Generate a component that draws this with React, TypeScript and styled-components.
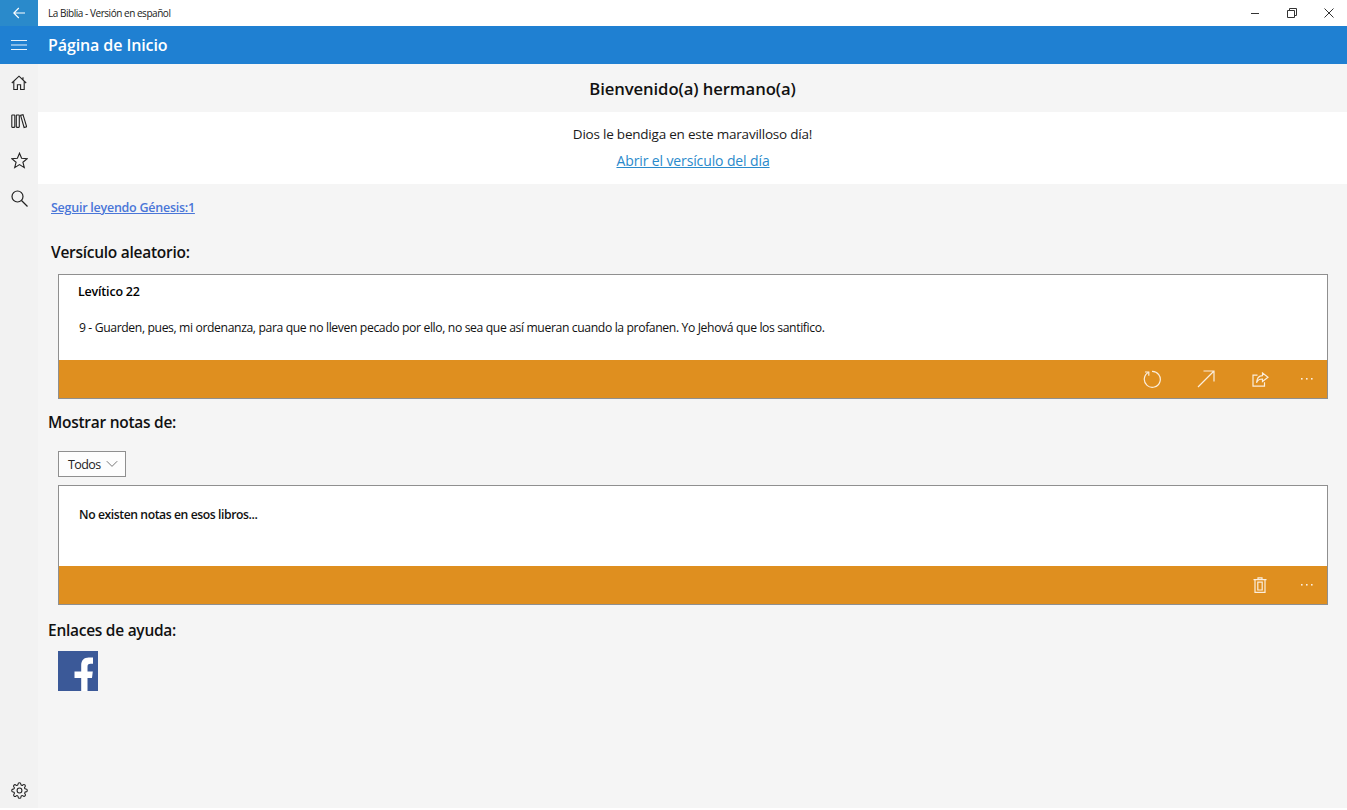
import React from "react";
import styled, { createGlobalStyle } from "styled-components";

const GlobalStyle = createGlobalStyle`
  html, body {
    margin: 0;
    padding: 0;
    background: #ffffff;
    font-family: "Open Sans", "Noto Sans", "Liberation Sans", sans-serif;
    color: #000;
    overflow: hidden;
  }
`;

const Shell = styled.div`
  width: 1347px;
  height: 810px;
  display: flex;
  flex-direction: column;
`;

const TitleBar = styled.div`
  height: 26px;
  display: flex;
  align-items: center;
  flex-shrink: 0;
`;

const BackButton = styled.div`
  width: 38px;
  height: 26px;
  background: #2a8acb;
  display: flex;
  align-items: center;
  justify-content: center;
`;

const WindowTitle = styled.span`
  margin-left: 10px;
  font-size: 10px;
  letter-spacing: -0.46px;
  color: #1a1a1a;
  flex: 1;
`;

const WindowButton = styled.div`
  width: 37px;
  height: 26px;
  display: flex;
  align-items: center;
  justify-content: center;
`;

const HeaderBar = styled.div`
  height: 38px;
  background: #1f80d2;
  display: flex;
  align-items: center;
  flex-shrink: 0;
`;

const MenuButton = styled.div`
  width: 38px;
  display: flex;
  justify-content: center;
`;

const PageTitle = styled.h1`
  margin: 0 0 0 10px;
  font-size: 16px;
  font-weight: 600;
  letter-spacing: -0.1px;
  color: #fff;
`;

const Body = styled.div`
  height: 744px;
  display: flex;
  background: #f5f5f5;
`;

const Sidebar = styled.nav`
  width: 38px;
  background: #f2f2f2;
  display: flex;
  flex-direction: column;
  align-items: center;
  padding: 11px 0 9px;
  box-sizing: border-box;
  flex-shrink: 0;
`;

const NavIcon = styled.div<{ $last?: boolean }>`
  width: 38px;
  height: 38.3px;
  display: flex;
  justify-content: center;
  margin-top: ${(p) => (p.$last ? "auto" : "0")};
  align-items: ${(p) => (p.$last ? "flex-end" : "flex-start")};
`;

const Main = styled.main`
  flex: 1;
  display: flex;
  flex-direction: column;
`;

const WelcomeTitle = styled.div`
  height: 48px;
  display: flex;
  align-items: center;
  justify-content: center;
  font-size: 16.7px;
  font-weight: 600;
  letter-spacing: -0.1px;
  color: #111;
  box-sizing: border-box;
`;

const WelcomeBand = styled.div`
  height: 72px;
  background: #fff;
  display: flex;
  flex-direction: column;
  align-items: center;
  padding-top: 13px;
  box-sizing: border-box;
`;

const Blessing = styled.div`
  font-size: 13.5px;
  line-height: 19px;
  letter-spacing: -0.22px;
  color: #1a1a1a;
`;

const DailyLink = styled.a`
  margin: 7px 0 0 1px;
  font-size: 14px;
  line-height: 19px;
  letter-spacing: -0.12px;
  color: #2a8acb;
  text-decoration: underline;
`;

const ContinueLink = styled.a`
  margin: 15px 0 0 13px;
  font-size: 12.5px;
  line-height: 18px;
  font-weight: 600;
  letter-spacing: -0.25px;
  color: #4a76d8;
  text-decoration: underline;
`;

const SectionTitle = styled.h2<{ $indent: number; $top: number }>`
  margin: ${(p) => p.$top}px 0 0 ${(p) => p.$indent}px;
  font-size: 15.5px;
  line-height: 20px;
  font-weight: 600;
  letter-spacing: -0.27px;
  color: #111;
`;

const Card = styled.section<{ $bodyHeight: number; $top: number }>`
  margin: ${(p) => p.$top}px 19px 0 20px;
  border: 1px solid #8f8f8f;
  background: #fff;
  display: flex;
  flex-direction: column;
  flex-shrink: 0;
  height: ${(p) => p.$bodyHeight + 38 + 2}px;
  box-sizing: border-box;
`;

const CardBody = styled.div`
  flex: 1;
  min-height: 0;
`;

const CardHeading = styled.div`
  padding: 8px 0 0 19px;
  font-size: 12.5px;
  line-height: 18px;
  font-weight: 600;
  letter-spacing: -0.2px;
`;

const VerseText = styled.p`
  margin: 18px 0 0 20px;
  font-size: 12.2px;
  line-height: 18px;
  letter-spacing: -0.38px;
  color: #111;
`;

const EmptyText = styled.p`
  margin: 20px 0 0 20px;
  font-size: 12.2px;
  line-height: 18px;
  font-weight: 600;
  letter-spacing: -0.42px;
  color: #111;
`;

const ActionBar = styled.div`
  height: 38px;
  background: #df8f1f;
  display: flex;
  align-items: center;
  justify-content: flex-end;
  flex-shrink: 0;
`;

const ActionButton = styled.div<{ $width: number }>`
  width: ${(p) => p.$width}px;
  height: 38px;
  display: flex;
  align-items: center;
  justify-content: center;
`;

const Dropdown = styled.div`
  margin: 19px 0 0 20px;
  width: 68px;
  height: 26px;
  border: 1px solid #8f8f8f;
  box-sizing: border-box;
  background: #fdfdfd;
  display: flex;
  align-items: center;
  justify-content: space-between;
  padding: 0 6px 0 9px;
  font-size: 12.5px;
  letter-spacing: -0.6px;
  color: #222;
`;

const DropdownChevron = styled.span`
  display: flex;
  margin-right: 1px;
`;

const FacebookTile = styled.div`
  margin: 11px 0 0 20px;
  width: 40px;
  height: 40px;
`;

const BackIcon = () => (
  <svg width="14" height="14" viewBox="0 0 14 14" fill="none" stroke="#fff" strokeWidth="1.1">
    <path d="M13 7H1.8M6.8 2 1.8 7l5 5" />
  </svg>
);

const MinimizeIcon = () => (
  <svg width="10" height="10" viewBox="0 0 10 10" stroke="#333" strokeWidth="1">
    <path d="M1 5.5h8" />
  </svg>
);

const RestoreIcon = () => (
  <svg width="10" height="10" viewBox="0 0 10 10" fill="none" stroke="#333" strokeWidth="1">
    <path d="M.5 2.500h7v7h-7zM2.500 2.500v-2h7v7h-2" />
  </svg>
);

const CloseIcon = () => (
  <svg width="10" height="10" viewBox="0 0 10 10" stroke="#333" strokeWidth="1">
    <path d="M.5.5l9 9M9.500.5l-9 9" />
  </svg>
);

const HamburgerIcon = () => (
  <svg width="16" height="12" viewBox="0 0 16 12" stroke="#e8f2fb" strokeWidth="1">
    <path d="M0 1.500h16M0 6h16M0 10.500h16" />
  </svg>
);

const HomeIcon = () => (
  <svg width="16" height="16" viewBox="0 0 16 16" fill="none" stroke="#222" strokeWidth="1.1">
    <path d="M.8 8 8 1.200 15.200 8M2.800 6.400v8.100h3.600V9.800h3.200v4.700h3.600V6.400M12 4.600V2.300" />
  </svg>
);

const LibraryIcon = () => (
  <svg width="16" height="16" viewBox="0 0 16 16" fill="none" stroke="#222" strokeWidth="1.1">
    <rect x="0.8" y="2" width="3" height="12.4" rx="0.6" />
    <rect x="5.3" y="2" width="3" height="12.4" rx="0.6" />
    <path d="M9.600 2.400l2.400-.7 3.600 12-2.500.8z" />
  </svg>
);

const StarIcon = () => (
  <svg width="17" height="17" viewBox="0 0 17 17" fill="none" stroke="#222" strokeWidth="1.1">
    <path d="M8.500 1.200l2.100 5.100 5.600.4-4.300 3.500 1.400 5.400-4.800-3-4.800 3 1.400-5.400L.8 6.700l5.600-.4z" />
  </svg>
);

const SearchIcon = () => (
  <svg width="17" height="17" viewBox="0 0 17 17" fill="none" stroke="#222" strokeWidth="1.2">
    <circle cx="6.5" cy="6.5" r="5.5" />
    <path d="M10.500 10.500l6 6" />
  </svg>
);

const GearIcon = () => (
  <svg width="17" height="17" viewBox="0 0 24 24" fill="none" stroke="#222" strokeWidth="1.5">
    <circle cx="12" cy="12" r="3.4" />
    <path d="M19.400 15a1.650 1.650 0 0 0 .33 1.820l.06.06a2 2 0 1 1-2.830 2.830l-.06-.06a1.650 1.650 0 0 0-2.820 1.170V21a2 2 0 0 1-4 0v-.09A1.650 1.650 0 0 0 7.200 19.740l-.06.06a2 2 0 1 1-2.830-2.830l.06-.06a1.650 1.650 0 0 0-1.170-2.820H3a2 2 0 0 1 0-4h.09A1.650 1.650 0 0 0 4.260 7.200l-.06-.06a2 2 0 1 1 2.830-2.830l.06.06a1.650 1.650 0 0 0 2.820-1.170V3a2 2 0 0 1 4 0v.09a1.650 1.650 0 0 0 2.820 1.170l.06-.06a2 2 0 1 1 2.830 2.830l-.06.06a1.650 1.650 0 0 0 1.170 2.820H21a2 2 0 0 1 0 4h-.09a1.650 1.650 0 0 0-1.510 1.090z" />
  </svg>
);

const RefreshIcon = () => (
  <svg width="18" height="18" viewBox="0 0 18 18" fill="none" stroke="#fbeedd" strokeWidth="1.2">
    <path d="M5.600 2.200A8 8 0 1 0 9 1.300" />
    <path d="M5.800 5.800V2H2" />
  </svg>
);

const ExpandIcon = () => (
  <svg width="18" height="18" viewBox="0 0 18 18" fill="none" stroke="#fbeedd" strokeWidth="1.2">
    <path d="M1 17 17 1M6.500 1H17v10.500" />
  </svg>
);

const ShareIcon = () => (
  <svg width="17" height="15" viewBox="0 0 17 15" fill="none" stroke="#fbeedd" strokeWidth="1.2">
    <path d="M5.500 3.200H1v11h11.500v-4" />
    <path d="M10.500 1l5.500 4.200-5.500 4.300V7c-3.500 0-5 1.200-6 3.800C4.800 6.600 7 3.800 10.500 3.600z" />
  </svg>
);

const TrashIcon = () => (
  <svg width="14" height="16" viewBox="0 0 14 16" fill="none" stroke="#fbeedd" strokeWidth="1.2">
    <path d="M.5 2.600h13M5 2.400V.8h4v1.600M2 2.600v12.800h10V2.600" />
    <path d="M4.800 5.200v7.800h4.400V5.200z" />
  </svg>
);

const MoreIcon = () => (
  <svg width="14" height="4" viewBox="0 0 14 4" fill="#fbeedd">
    <rect x="1" y="1" width="1.6" height="1.6" />
    <rect x="6" y="1" width="1.6" height="1.6" />
    <rect x="11" y="1" width="1.6" height="1.6" />
  </svg>
);

const ChevronIcon = () => (
  <svg width="12" height="8" viewBox="0 0 12 8" fill="none" stroke="#777" strokeWidth="1">
    <path d="M.8 1.200 6 6.400l5.200-5.200" />
  </svg>
);

const FacebookIcon = () => (
  <svg width="40" height="40" viewBox="0 0 40 40">
    <rect width="40" height="40" fill="#3b5998" />
    <path
      fill="#fff"
      d="M29.500 40V27H34l.8-6.500h-5.300V16c0-2 .6-3.200 3.200-3.200H35V6.600c-.6-.1-2.400-.2-4.300-.2-4.500 0-7.500 2.700-7.500 7.700v6.400h-6.700V27h6.700v13z"
    />
  </svg>
);

export default function App() {
  return (
    <Shell>
      <GlobalStyle />
      <TitleBar>
        <BackButton>
          <BackIcon />
        </BackButton>
        <WindowTitle>La Biblia - Versión en español</WindowTitle>
        <WindowButton>
          <MinimizeIcon />
        </WindowButton>
        <WindowButton>
          <RestoreIcon />
        </WindowButton>
        <WindowButton>
          <CloseIcon />
        </WindowButton>
      </TitleBar>
      <HeaderBar>
        <MenuButton>
          <HamburgerIcon />
        </MenuButton>
        <PageTitle>Página de Inicio</PageTitle>
      </HeaderBar>
      <Body>
        <Sidebar>
          <NavIcon>
            <HomeIcon />
          </NavIcon>
          <NavIcon>
            <LibraryIcon />
          </NavIcon>
          <NavIcon>
            <StarIcon />
          </NavIcon>
          <NavIcon>
            <SearchIcon />
          </NavIcon>
          <NavIcon $last>
            <GearIcon />
          </NavIcon>
        </Sidebar>
        <Main>
          <WelcomeTitle>Bienvenido(a) hermano(a)</WelcomeTitle>
          <WelcomeBand>
            <Blessing>Dios le bendiga en este maravilloso día!</Blessing>
            <DailyLink>Abrir el versículo del día</DailyLink>
          </WelcomeBand>
          <ContinueLink>Seguir leyendo Génesis:1</ContinueLink>
          <SectionTitle $indent={13} $top={25}>
            Versículo aleatorio:
          </SectionTitle>
          <Card $bodyHeight={85} $top={12}>
            <CardBody>
              <CardHeading>Levítico 22</CardHeading>
              <VerseText>
                9 - Guarden, pues, mi ordenanza, para que no lleven pecado por ello, no sea que así mueran cuando la
                profanen. Yo Jehová que los santifico.
              </VerseText>
            </CardBody>
            <ActionBar>
              <ActionButton $width={54}>
                <RefreshIcon />
              </ActionButton>
              <ActionButton $width={54}>
                <ExpandIcon />
              </ActionButton>
              <ActionButton $width={54}>
                <ShareIcon />
              </ActionButton>
              <ActionButton $width={40}>
                <MoreIcon />
              </ActionButton>
            </ActionBar>
          </Card>
          <SectionTitle $indent={10} $top={13}>
            Mostrar notas de:
          </SectionTitle>
          <Dropdown>
            Todos
            <DropdownChevron>
              <ChevronIcon />
            </DropdownChevron>
          </Dropdown>
          <Card $bodyHeight={80} $top={8}>
            <CardBody>
              <EmptyText>No existen notas en esos libros...</EmptyText>
            </CardBody>
            <ActionBar>
              <ActionButton $width={54}>
                <TrashIcon />
              </ActionButton>
              <ActionButton $width={40}>
                <MoreIcon />
              </ActionButton>
            </ActionBar>
          </Card>
          <SectionTitle $indent={10} $top={15}>
            Enlaces de ayuda:
          </SectionTitle>
          <FacebookTile>
            <FacebookIcon />
          </FacebookTile>
        </Main>
      </Body>
    </Shell>
  );
}
